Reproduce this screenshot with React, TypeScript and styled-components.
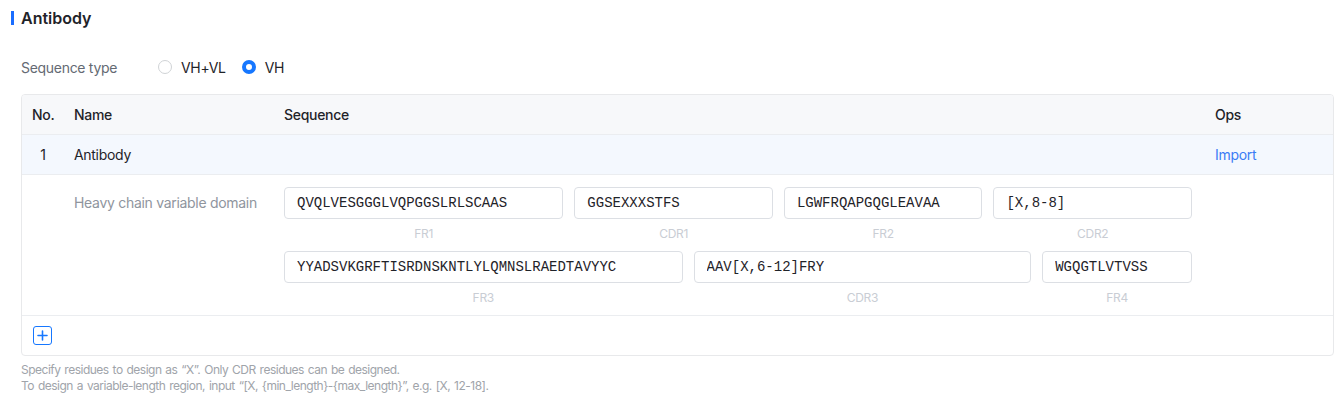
import React, { useState } from 'react';
import styled, { createGlobalStyle } from 'styled-components';

const GlobalStyle = createGlobalStyle`
  body {
    margin: 0;
    background: #ffffff;
    font-family: Inter, Roboto, "Noto Sans", "Liberation Sans", sans-serif;
    letter-spacing: -0.3px;
    color: #1f2329;
  }
`;

const Page = styled.div`
  padding: 0 8px 0 11px;
`;

const Title = styled.h2`
  display: flex;
  align-items: center;
  gap: 7px;
  margin: 0;
  height: 36px;
  font-size: 16px;
  font-weight: 600;
  letter-spacing: 0;
  color: #1f2329;
  &::before {
    content: '';
    width: 3px;
    height: 14px;
    background: #1a6dff;
  }
`;

const Content = styled.div`
  padding-left: 10px;
`;

const TypeRow = styled.div`
  display: flex;
  align-items: center;
  height: 28px;
  margin: 17px 0 13px;
  font-size: 14px;
`;

const TypeLabel = styled.span`
  color: #646a73;
  width: 137px;
`;

const RadioOption = styled.label`
  display: flex;
  align-items: center;
  gap: 9px;
  margin-right: 16px;
  color: #1f2329;
  cursor: pointer;
`;

const RadioDot = styled.span<{ $checked: boolean }>`
  width: 14px;
  height: 14px;
  box-sizing: border-box;
  border-radius: 50%;
  border: ${(p) => (p.$checked ? '4.5px solid #1677ff' : '1px solid #d0d3d6')};
  background: #ffffff;
`;

const Table = styled.div`
  border: 1px solid #e8e9eb;
  border-radius: 4px;
  overflow: hidden;
  font-size: 14px;
`;

const Row = styled.div<{ $bg?: string }>`
  display: grid;
  grid-template-columns: 42px 210px 1fr 128px;
  align-items: center;
  min-height: 39px;
  background: ${(p) => p.$bg || '#ffffff'};
  border-bottom: 1px solid #ebedf0;
`;

const HeadCell = styled.div<{ $center?: boolean }>`
  padding: 0 10px;
  font-weight: 500;
  color: #1f2329;
  text-align: ${(p) => (p.$center ? 'center' : 'left')};
`;

const Cell = styled.div<{ $center?: boolean }>`
  padding: 0 10px;
  color: #1f2329;
  text-align: ${(p) => (p.$center ? 'center' : 'left')};
`;

const ImportLink = styled.a`
  color: #3a7cf5;
  cursor: pointer;
`;

const DetailRow = styled.div`
  display: grid;
  grid-template-columns: 42px 210px 1fr 128px;
  align-items: start;
  padding-top: 12px;
  border-bottom: 1px solid #ebedf0;
`;

const DomainName = styled.div`
  grid-column: 2;
  padding: 0 10px;
  line-height: 32px;
  white-space: nowrap;
  color: #8f959e;
`;

const Regions = styled.div`
  grid-column: 3;
  padding-left: 10px;
  width: 908px;
  display: flex;
  flex-direction: column;
`;

const RegionLine = styled.div`
  display: flex;
  gap: 11px;
`;

const Region = styled.div<{ $w: number }>`
  width: ${(p) => p.$w}px;
  display: flex;
  flex-direction: column;
`;

const SeqInput = styled.input`
  box-sizing: border-box;
  height: 32px;
  width: 100%;
  padding: 0 12px;
  border: 1px solid #dcdfe4;
  border-radius: 4px;
  font-family: "Liberation Mono", "DejaVu Sans Mono", monospace;
  font-size: 14px;
  letter-spacing: 0;
  color: #1f2329;
  outline: none;
`;

const RegionLabel = styled.div`
  height: 32px;
  line-height: 30px;
  text-align: center;
  font-size: 12px;
  color: #c9cdd4;
`;

const AddRow = styled.div`
  padding: 10px 11px 10px;
  height: 19px;
`;

const AddButton = styled.button`
  width: 19px;
  height: 19px;
  padding: 0;
  border: 1.5px solid #1677ff;
  border-radius: 3px;
  background: #ffffff;
  display: flex;
  align-items: center;
  justify-content: center;
  cursor: pointer;
`;

const Hint = styled.div`
  margin-top: 6px;
  font-size: 12px;
  line-height: 16px;
  letter-spacing: -0.5px;
  word-spacing: 1px;
  color: #a0a4aa;
`;

const lines = [
  [
    { label: 'FR1', value: 'QVQLVESGGGLVQPGGSLRLSCAAS', w: 280 },
    { label: 'CDR1', value: 'GGSEXXXSTFS', w: 199 },
    { label: 'FR2', value: 'LGWFRQAPGQGLEAVAA', w: 199 },
    { label: 'CDR2', value: '[X,8-8]', w: 199 },
  ],
  [
    { label: 'FR3', value: 'YYADSVKGRFTISRDNSKNTLYLQMNSLRAEDTAVYYC', w: 399 },
    { label: 'CDR3', value: 'AAV[X,6-12]FRY', w: 338 },
    { label: 'FR4', value: 'WGQGTLVTVSS', w: 150 },
  ],
];

const App: React.FC = () => {
  const [type, setType] = useState('VH');

  return (
    <Page>
      <GlobalStyle />
      <Title>Antibody</Title>
      <Content>
        <TypeRow>
          <TypeLabel>Sequence type</TypeLabel>
          {['VH+VL', 'VH'].map((t) => (
            <RadioOption key={t} onClick={() => setType(t)}>
              <RadioDot $checked={type === t} />
              {t}
            </RadioOption>
          ))}
        </TypeRow>
        <Table>
          <Row $bg="#f7f8fa">
            <HeadCell $center>No.</HeadCell>
            <HeadCell>Name</HeadCell>
            <HeadCell>Sequence</HeadCell>
            <HeadCell>Ops</HeadCell>
          </Row>
          <Row $bg="#f4f8fe">
            <Cell $center>1</Cell>
            <Cell>Antibody</Cell>
            <Cell />
            <Cell>
              <ImportLink>Import</ImportLink>
            </Cell>
          </Row>
          <DetailRow>
            <DomainName>Heavy chain variable domain</DomainName>
            <Regions>
              {lines.map((line, i) => (
                <RegionLine key={i}>
                  {line.map((r) => (
                    <Region key={r.label} $w={r.w}>
                      <SeqInput defaultValue={r.value} />
                      <RegionLabel>{r.label}</RegionLabel>
                    </Region>
                  ))}
                </RegionLine>
              ))}
            </Regions>
          </DetailRow>
          <AddRow>
            <AddButton>
              <svg width="11" height="11" viewBox="0 0 11 11">
                <path d="M5.5 1v9M1 5.5h9" stroke="#1677ff" strokeWidth="1.6" strokeLinecap="round" />
              </svg>
            </AddButton>
          </AddRow>
        </Table>
        <Hint>
          Specify residues to design as “X”. Only CDR residues can be designed.
          <br />
          To design a variable-length region, input “[X, {'{min_length}'}-{'{max_length}'}”, e.g. [X, 12-18].
        </Hint>
      </Content>
    </Page>
  );
};

export default App;
